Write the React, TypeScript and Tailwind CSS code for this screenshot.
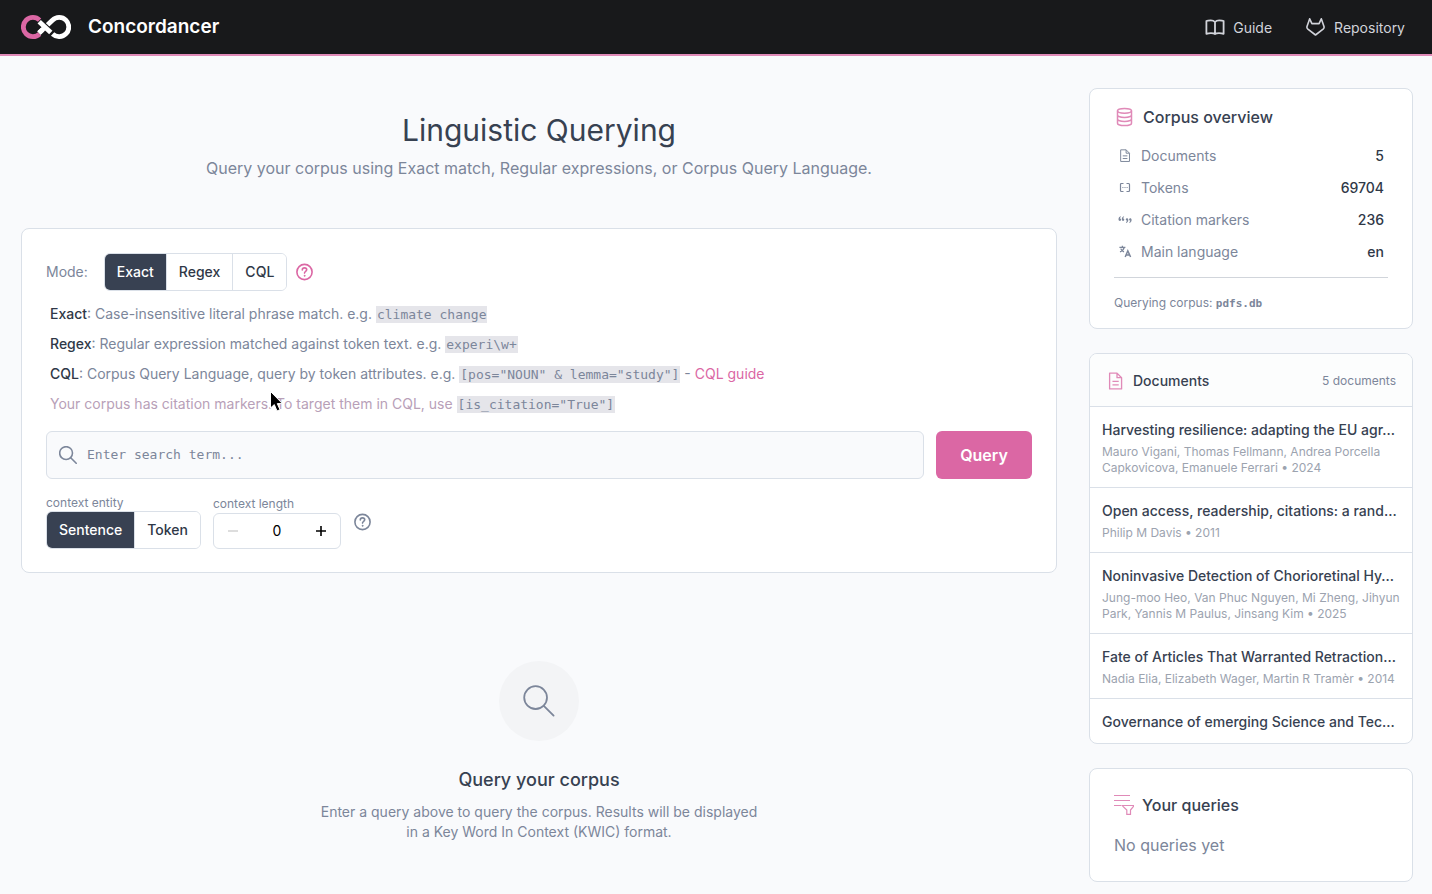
import { useState, type ReactNode } from 'react'
import clsx from 'clsx'

const corpusStats = [
  { label: 'Documents', value: '5', icon: <DocIcon className="w-[14px] h-[14px]" /> },
  { label: 'Tokens', value: '69704', icon: <TokensIcon /> },
  { label: 'Citation markers', value: '236', icon: <QuotesIcon /> },
  { label: 'Main language', value: 'en', icon: <LanguageIcon /> },
]

const documents = [
  {
    title: 'Harvesting resilience: adapting the EU agr…',
    meta: 'Mauro Vigani, Thomas Fellmann, Andrea Porcella Capkovicova, Emanuele Ferrari • 2024',
  },
  {
    title: 'Open access, readership, citations: a rand…',
    meta: 'Philip M Davis • 2011',
  },
  {
    title: 'Noninvasive Detection of Chorioretinal Hy…',
    meta: 'Jung-moo Heo, Van Phuc Nguyen, Mi Zheng, Jihyun Park, Yannis M Paulus, Jinsang Kim • 2025',
  },
  {
    title: 'Fate of Articles That Warranted Retraction…',
    meta: 'Nadia Elia, Elizabeth Wager, Martin R Tramèr • 2014',
  },
  { title: 'Governance of emerging Science and Tec…', meta: '' },
]

function Logo() {
  return (
    <svg className="w-[50px] h-6" viewBox="0 0 50 24" fill="none" aria-hidden="true">
      <path d="M18.6 5.1A9.6 9.6 0 1 0 18.6 18.9" stroke="#db67a4" strokeWidth="4.8" />
      <path d="M18 18L31.4 5.2A9.6 9.6 0 1 1 31.6 19" stroke="#18191b" strokeWidth="7" />
      <path d="M18 18L31.4 5.2A9.6 9.6 0 1 1 31.6 19" stroke="#fff" strokeWidth="4.8" />
      <path d="M21 9.2L30.6 18.2" stroke="#18191b" strokeWidth="6.8" />
      <path d="M18.2 6.8L29.8 17.6" stroke="#18191b" strokeWidth="6" />
      <path d="M18.2 6.8L29.8 17.6" stroke="#fff" strokeWidth="4.8" />
      <path d="M18 18L24 12.2" stroke="#fff" strokeWidth="4.8" />
    </svg>
  )
}

function BookIcon() {
  return (
    <svg className="w-5 h-5" viewBox="0 0 20 20" fill="none" stroke="currentColor" strokeWidth="1.8" strokeLinejoin="round" aria-hidden="true">
      <path d="M10 4C9 2.9 7.6 2.4 5.8 2.4C4.2 2.4 2.6 2.4 1.4 3V15.8C2.8 15.4 4.4 15.2 6 15.2C8 15.2 9.2 15.4 10 16C10.8 15.4 12 15.2 14 15.2C15.6 15.2 17.2 15.4 18.6 15.8V3C17.4 2.4 15.8 2.4 14.2 2.4C12.4 2.4 11 2.9 10 4ZM10 4V16" />
    </svg>
  )
}

function GitlabIcon() {
  return (
    <svg className="w-5 h-5" viewBox="0 0 20 20" fill="none" stroke="currentColor" strokeWidth="1.6" strokeLinejoin="round" aria-hidden="true">
      <path d="M9.5 17L1.9 11.2C1.1 10.5.7 9.6 1 8.6L3.7.8L5.9 5.6H13.1L15.3.8L18 8.6C18.3 9.6 17.9 10.5 17.1 11.2Z" />
    </svg>
  )
}

function DatabaseIcon() {
  return (
    <svg className="w-5 h-5" viewBox="0 0 20 20" fill="none" stroke="currentColor" strokeWidth="1.5" aria-hidden="true">
      <ellipse cx="10.5" cy="3.8" rx="7" ry="2.4" />
      <path d="M3.5 3.8V16.2C3.5 17.5 6.6 18.6 10.5 18.6S17.5 17.5 17.5 16.2V3.8M3.5 8C3.5 9.3 6.6 10.4 10.5 10.4S17.5 9.3 17.5 8M3.5 12.1C3.5 13.4 6.6 14.5 10.5 14.5S17.5 13.4 17.5 12.1" />
    </svg>
  )
}

function DocIcon({ className }: { className: string }) {
  return (
    <svg className={className} viewBox="0 0 20 20" fill="none" stroke="currentColor" strokeWidth="1.4" strokeLinejoin="round" aria-hidden="true">
      <path d="M3.8 1.2H11.6L16.4 6V17.8H3.8ZM11.6 1.2V6H16.4M6.8 9.8H13.4M6.8 13.6H13.4" />
    </svg>
  )
}

function TokensIcon() {
  return (
    <svg className="w-[14px] h-[14px]" viewBox="0 0 14 14" fill="none" stroke="currentColor" strokeWidth="1.2" aria-hidden="true">
      <path d="M5.5 2.5H3.4Q2.5 2.5 2.5 3.4V9.6Q2.5 10.5 3.4 10.5H5.5M8.5 2.5H10.6Q11.5 2.5 11.5 3.4V9.6Q11.5 10.5 10.6 10.5H8.5" />
      <path d="M4.4 6.5H5.4M6.5 6.5H7.5M8.6 6.5H9.6" />
    </svg>
  )
}

function QuotesIcon() {
  return (
    <svg className="w-[14px] h-[14px]" viewBox="0 0 14 14" fill="currentColor" aria-hidden="true">
      <path d="M2.7 3.2C1.3 3.6.5 4.8.5 6.2C.5 7.3 1.1 7.9 1.9 7.9S3.1 7.3 3.1 6.6S2.6 5.4 1.9 5.4C1.9 4.7 2.3 4.2 2.9 4ZM6 3.2C4.6 3.6 3.8 4.8 3.8 6.2C3.8 7.3 4.4 7.9 5.1 7.9S6.3 7.3 6.3 6.6S5.8 5.4 5.1 5.4C5.1 4.7 5.5 4.2 6.1 4Z" />
      <path d="M8.2 9.9C9.6 9.5 10.3 8.3 10.3 7C10.3 5.9 9.7 5.3 9 5.3S7.8 5.9 7.8 6.6S8.3 7.8 9 7.8C9 8.4 8.6 8.9 8 9.1ZM11.5 9.9C12.9 9.5 13.6 8.3 13.6 7C13.6 5.9 13 5.3 12.3 5.3S11.1 5.9 11.1 6.6S11.6 7.8 12.3 7.8C12.3 8.4 11.9 8.9 11.3 9.1Z" />
    </svg>
  )
}

function LanguageIcon() {
  return (
    <svg className="w-[14px] h-[14px]" viewBox="0 0 14 14" fill="none" stroke="currentColor" strokeWidth="1.3" aria-hidden="true">
      <path d="M1.4 2.4H7.4M4.4 .8V2.4M6.2 2.4C5.8 4.6 4.2 6 2 6.8M2.8 3.6C3.2 5.2 4.4 6.2 6 6.8" />
      <path d="M7.2 12L9.8 5.8L12.6 12M8 10H11.6" strokeWidth="1.5" />
    </svg>
  )
}

function QueriesIcon() {
  return (
    <svg className="w-5 h-5" viewBox="0 0 20 20" fill="none" stroke="currentColor" strokeWidth="1.2" aria-hidden="true">
      <path d="M0 .5H16M0 5.5H16M0 10.5H7.5" />
      <path d="M8.5 10.5H19.5V11.5L16.5 15V19.4H12.8V15L9 11.5Z" />
    </svg>
  )
}

function HelpIcon() {
  return (
    <svg className="w-[18px] h-[18px]" viewBox="0 0 18 18" fill="none" stroke="currentColor" strokeWidth="1.6" strokeLinecap="round" aria-hidden="true">
      <circle cx="9.5" cy="9" r="7.6" />
      <path d="M7.3 6.9C7.3 5.5 8.3 4.9 9.5 4.9S11.7 5.6 11.7 6.8C11.7 8.3 9.5 8.3 9.5 10.1" />
      <circle cx="9.5" cy="12.8" r=".5" fill="currentColor" strokeWidth=".8" />
    </svg>
  )
}

function SearchIcon({ className, strokeWidth }: { className: string; strokeWidth: number }) {
  return (
    <svg className={className} viewBox="0 0 32 32" fill="none" stroke="currentColor" strokeWidth={strokeWidth} strokeLinecap="round" aria-hidden="true">
      <circle cx="12.6" cy="12.6" r="11.4" />
      <path d="M20.8 20.8L30.6 30.6" />
    </svg>
  )
}

function Pointer() {
  return (
    <svg className="absolute left-[223px] top-[91px] w-4 h-6" viewBox="0 0 16 24" aria-hidden="true">
      <path d="M1.5 1.5V18L5.3 14.6L8 21L11 19.7L8.3 13.6H13.4Z" fill="#000" stroke="#fff" strokeWidth="1" />
    </svg>
  )
}

function Card({ className, children }: { className?: string; children: ReactNode }) {
  return <section className={clsx('rounded-lg border border-[#dae0e8] bg-white', className)}>{children}</section>
}

function Code({ children }: { children: ReactNode }) {
  return <code className="bg-[#e5e5ea] px-px py-px font-['DejaVu_Sans_Mono',monospace] text-[13px] leading-none">{children}</code>
}

type SegmentedProps = {
  label: string
  options: string[]
  value: string
  onChange: (value: string) => void
}

function Segmented({ label, options, value, onChange }: SegmentedProps) {
  return (
    <div role="group" aria-label={label} className="flex w-fit h-[38px] overflow-hidden rounded-md border border-[#dae0e8] divide-x divide-[#dae0e8]">
      {options.map((option) => (
        <button
          key={option}
          type="button"
          aria-pressed={option === value}
          onClick={() => onChange(option)}
          className={clsx('px-3 text-sm font-medium', option === value ? 'bg-[#384152] text-white' : 'bg-white text-[#2f3847]')}
        >
          {option}
        </button>
      ))}
    </div>
  )
}

export default function App() {
  const [mode, setMode] = useState('Exact')
  const [entity, setEntity] = useState('Sentence')
  const [length, setLength] = useState(0)
  const [term, setTerm] = useState('')

  return (
    <div className="min-h-screen bg-[#f9fafc] font-['Inter',sans-serif] text-[#7c869a]">
      <header className="flex h-14 items-center justify-between border-b-2 border-[#e08ab8] bg-[#18191b] pl-[21px] pr-[27px]">
        <div className="flex items-center gap-[17px]">
          <Logo />
          <span className="pt-px text-[19px] font-semibold text-white">Concordancer</span>
        </div>
        <nav className="flex items-center gap-[34px] pt-px text-sm text-[#d1d3da]">
          <a href="#guide" className="flex items-center gap-2">
            <BookIcon />
            Guide
          </a>
          <a href="#repository" className="flex items-center gap-2">
            <GitlabIcon />
            Repository
          </a>
        </nav>
      </header>

      <div className="grid grid-cols-[minmax(0,1fr)_324px] gap-8 pt-8 pb-3 pl-[21px] pr-[19px]">
        <main>
          <div className="pt-6 text-center">
            <h1 className="text-3xl text-[#374151]">Linguistic Querying</h1>
            <p className="mt-2">Query your corpus using Exact match, Regular expressions, or Corpus Query Language.</p>
          </div>

          <Card className="mt-12 px-6 pt-6 pb-[23px]">
            <div className="flex items-center">
              <span className="mr-4 text-sm">Mode:</span>
              <Segmented label="Mode" options={['Exact', 'Regex', 'CQL']} value={mode} onChange={setMode} />
              <button type="button" aria-label="Mode help" className="ml-2 text-[#db67a4]">
                <HelpIcon />
              </button>
            </div>

            <div className="relative mt-2 pl-1 text-sm leading-[30px]">
              <p>
                <strong className="font-medium text-[#2f3847]">Exact</strong>: Case-insensitive literal phrase match. e.g. <Code>climate change</Code>
              </p>
              <p>
                <strong className="font-medium text-[#2f3847]">Regex</strong>: Regular expression matched against token text. e.g. <Code>experi\w+</Code>
              </p>
              <p>
                <strong className="font-medium text-[#2f3847]">CQL</strong>: Corpus Query Language, query by token attributes. e.g.{' '}
                <Code>[pos="NOUN" &amp; lemma="study"]</Code> -{' '}
                <a href="#cql-guide" className="text-[#db67a4]">
                  CQL guide
                </a>
              </p>
              <p className="text-[#b8a0b8]">
                Your corpus has citation markers. To target them in CQL, use <span className="text-[#7c869a]"><Code>[is_citation="True"]</Code></span>
              </p>
              <Pointer />
            </div>

            <form className="mt-3 flex gap-3" onSubmit={(e) => e.preventDefault()}>
              <label className="flex h-12 flex-1 items-center gap-[10px] rounded-md border border-[#dae0e8] bg-[#f9fafc] px-3 pb-px">
                <SearchIcon className="w-[18px] h-[18px]" strokeWidth={2.8} />
                <input
                  type="text"
                  aria-label="Search term"
                  placeholder="Enter search term..."
                  value={term}
                  onChange={(e) => setTerm(e.target.value)}
                  className="flex-1 bg-transparent font-['DejaVu_Sans_Mono',monospace] text-[13px] outline-none placeholder:text-[#7c869a]"
                />
              </label>
              <button type="submit" className="h-12 w-24 rounded-md bg-[#db67a4] font-semibold text-white">
                Query
              </button>
            </form>

            <div className="mt-4 flex items-start gap-3">
              <div>
                <div className="text-xs leading-4">context entity</div>
                <Segmented label="context entity" options={['Sentence', 'Token']} value={entity} onChange={setEntity} />
              </div>
              <div>
                <label htmlFor="context-length" className="block text-xs leading-[18px]">
                  context length
                </label>
                <div className="flex h-9 w-32 items-center justify-between rounded-md border border-[#dae0e8] px-3">
                  <button type="button" aria-label="Decrease" disabled={length === 0} onClick={() => setLength(length - 1)} className="text-black disabled:text-[#cfcfcf]">
                    <svg className="w-[14px] h-[14px]" viewBox="0 0 14 14" stroke="currentColor" strokeWidth="1.4">
                      <path d="M2 7H12" />
                    </svg>
                  </button>
                  <input
                    id="context-length"
                    inputMode="numeric"
                    value={length}
                    onChange={(e) => setLength(Number(e.target.value) || 0)}
                    className="w-10 text-center text-sm text-black outline-none"
                  />
                  <button type="button" aria-label="Increase" onClick={() => setLength(length + 1)} className="text-black">
                    <svg className="w-[14px] h-[14px]" viewBox="0 0 14 14" stroke="currentColor" strokeWidth="1.6">
                      <path d="M2 7H12M7 2V12" />
                    </svg>
                  </button>
                </div>
              </div>
              <button type="button" aria-label="Context help" className="pt-[18px]">
                <HelpIcon />
              </button>
            </div>
          </Card>

          <div className="flex flex-col items-center pt-22 text-center">
            <div className="flex h-20 w-20 items-center justify-center rounded-full bg-[#f3f4f6]">
              <SearchIcon className="w-8 h-8" strokeWidth={1.8} />
            </div>
            <h2 className="mt-[25px] text-lg font-medium text-[#374151]">Query your corpus</h2>
            <p className="mt-2 w-[448px] text-sm">
              Enter a query above to query the corpus. Results will be displayed in a Key Word In Context (KWIC) format.
            </p>
          </div>
        </main>

        <aside className="flex flex-col gap-6">
          <Card className="px-6 py-4">
            <h2 className="flex items-center gap-[9px] font-medium text-[#374151]">
              <span className="text-[#e08ab8]">
                <DatabaseIcon />
              </span>
              Corpus overview
            </h2>
            <dl className="mt-[11px]">
              {corpusStats.map((stat) => (
                <div key={stat.label} className="flex h-8 items-center justify-between px-1 text-sm">
                  <dt className="flex items-center gap-[9px]">
                    {stat.icon}
                    {stat.label}
                  </dt>
                  <dd className="font-medium text-[#2f3847]">{stat.value}</dd>
                </div>
              ))}
            </dl>
            <p className="mt-[9px] border-t border-[#d1d5db] pt-4 text-xs leading-[18px]">
              Querying corpus: <span className="font-['DejaVu_Sans_Mono',monospace] text-[11px] leading-none font-bold">pdfs.db</span>
            </p>
          </Card>

          <Card className="overflow-hidden">
            <div className="flex h-[53px] items-center justify-between border-b border-[#dae0e8] bg-[#fcfdfd] px-4 pt-[2px]">
              <h2 className="flex items-center gap-2 text-sm font-medium text-[#374151]">
                <span className="text-[#e08ab8]">
                  <DocIcon className="w-[19px] h-[19px]" />
                </span>
                Documents
              </h2>
              <span className="text-xs">5 documents</span>
            </div>
            <ul className="divide-y divide-[#dae0e8]">
              {documents.map((doc) => (
                <li key={doc.title} className="px-3 pt-[13px] pb-[11px]">
                  <h3 className="truncate text-sm font-medium text-[#374151]">{doc.title}</h3>
                  {doc.meta && <p className="mt-1 text-xs text-[#9ca3af]">{doc.meta}</p>}
                </li>
              ))}
            </ul>
          </Card>

          <Card className="p-6">
            <h2 className="flex items-center gap-2 font-medium text-[#374151]">
              <span className="text-[#e08ab8]">
                <QueriesIcon />
              </span>
              Your queries
            </h2>
            <p className="mt-4">No queries yet</p>
          </Card>
        </aside>
      </div>
    </div>
  )
}
